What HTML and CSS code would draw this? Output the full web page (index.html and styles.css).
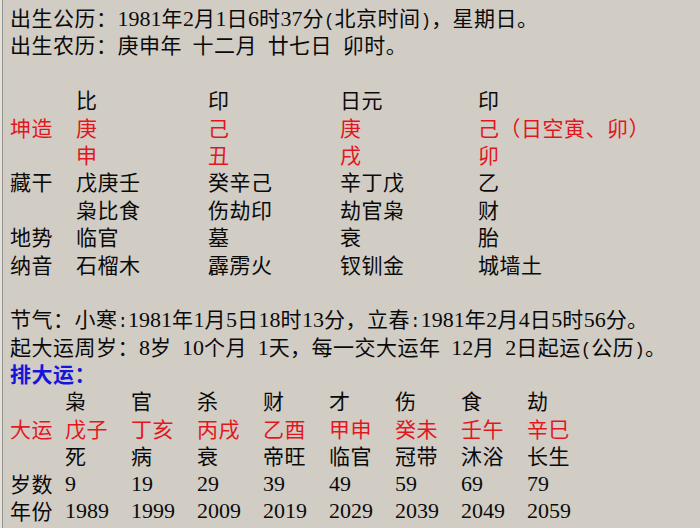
FILE: index.html
```html
<!DOCTYPE html>
<html lang="zh-CN">
<head>
<meta charset="utf-8">
<title>八字排盘</title>
<link rel="stylesheet" href="styles.css">
</head>
<body>
<div class="frame">
  <div class="sheet">
    <div class="line">出生公历：<span class="n">1981</span>年<span class="n">2</span>月<span class="n">1</span>日<span class="n">6</span>时<span class="n">37</span>分<span class="p">(</span>北京时间<span class="p">)</span>，星期日。</div>
    <div class="line">出生农历：庚申年<span class="p"> </span>十二月<span class="p"> </span>廿七日<span class="p"> </span>卯时。</div>
    <div class="line"></div>

    <div class="pillars">
      <span></span><span>比</span><span>印</span><span>日元</span><span>印</span>
      <span class="red">坤造</span><span class="red">庚</span><span class="red">己</span><span class="red">庚</span><span class="red">己（日空寅、卯）</span>
      <span></span><span class="red">申</span><span class="red">丑</span><span class="red">戌</span><span class="red">卯</span>
      <span>藏干</span><span>戊庚壬</span><span>癸辛己</span><span>辛丁戊</span><span>乙</span>
      <span></span><span>枭比食</span><span>伤劫印</span><span>劫官枭</span><span>财</span>
      <span>地势</span><span>临官</span><span>墓</span><span>衰</span><span>胎</span>
      <span>纳音</span><span>石榴木</span><span>霹雳火</span><span>钗钏金</span><span>城墙土</span>
    </div>

    <div class="line"></div>
    <div class="line">节气：小寒<span class="p">:</span><span class="n">1981</span>年<span class="n">1</span>月<span class="n">5</span>日<span class="n">18</span>时<span class="n">13</span>分，立春<span class="p">:</span><span class="n">1981</span>年<span class="n">2</span>月<span class="n">4</span>日<span class="n">5</span>时<span class="n">56</span>分。</div>
    <div class="line">起大运周岁：<span class="n">8</span>岁<span class="p"> </span><span class="n">10</span>个月<span class="p"> </span><span class="n">1</span>天，每一交大运年<span class="p"> </span><span class="n">12</span>月<span class="p"> </span><span class="n">2</span>日起运<span class="p">(</span>公历<span class="p">)</span>。</div>
    <div class="line title">排大运：</div>

    <div class="dayun">
      <span></span><span>枭</span><span>官</span><span>杀</span><span>财</span><span>才</span><span>伤</span><span>食</span><span>劫</span>
      <span class="red">大运</span><span class="red">戊子</span><span class="red">丁亥</span><span class="red">丙戌</span><span class="red">乙酉</span><span class="red">甲申</span><span class="red">癸未</span><span class="red">壬午</span><span class="red">辛巳</span>
      <span></span><span>死</span><span>病</span><span>衰</span><span>帝旺</span><span>临官</span><span>冠带</span><span>沐浴</span><span>长生</span>
      <span>岁数</span><span class="n">9</span><span class="n">19</span><span class="n">29</span><span class="n">39</span><span class="n">49</span><span class="n">59</span><span class="n">69</span><span class="n">79</span>
      <span>年份</span><span class="n">1989</span><span class="n">1999</span><span class="n">2009</span><span class="n">2019</span><span class="n">2029</span><span class="n">2039</span><span class="n">2049</span><span class="n">2059</span>
    </div>
  </div>
</div>
</body>
</html>
```

FILE: styles.css
```css
html, body {
  margin: 0;
  padding: 0;
  background: #d1cdc5;
  overflow: hidden;
}

body {
  width: 700px;
  height: 528px;
}

.frame {
  height: 100%;
  border-left: 2px solid #e4e1da;
  box-sizing: border-box;
}

.sheet {
  height: 100%;
  box-sizing: border-box;
  border-left: 1px solid #94928c;
  padding: 4px 0 0 7px;
  font-family: "Noto Sans CJK SC", sans-serif;
  font-size: 21px;
  letter-spacing: 0.5px;
  line-height: 27.4px;
  color: #0a0a0a;
  white-space: nowrap;
}

.line {
  height: 27.4px;
}

.n {
  font-family: "Liberation Serif", serif;
  font-size: 22px;
  letter-spacing: 0;
}

.p {
  font-family: "Liberation Mono", monospace;
  font-size: 17.6px;
  letter-spacing: 0;
  white-space: pre;
}

.red {
  color: #e3161e;
}

.title {
  color: #1616d8;
  font-weight: 700;
}

.pillars {
  display: grid;
  grid-template-columns: 66px 132px 132px 138px auto;
  grid-auto-rows: 27.4px;
}

.dayun {
  display: grid;
  grid-template-columns: 55px repeat(8, 66px);
  grid-auto-rows: 27.4px;
}
```
